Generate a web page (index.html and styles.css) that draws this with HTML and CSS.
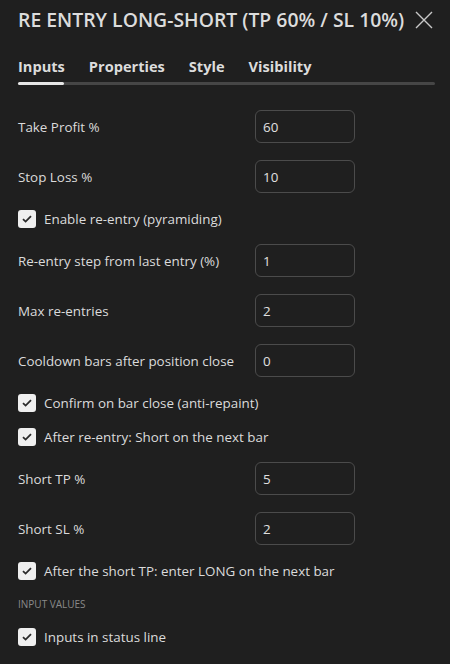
FILE: index.html
```html
<!DOCTYPE html>
<html>
<head>
<meta charset="utf-8">
<link rel="stylesheet" href="styles.css">
</head>
<body>
<div class="dialog">
  <header class="head">
    <h1 class="title">RE ENTRY LONG-SHORT (TP 60% / SL 10%)</h1>
    <svg class="close" width="18" height="18" viewBox="0 0 18 18"><path d="M1 1L17 17M17 1L1 17" stroke="#c8c8c8" stroke-width="1.4" fill="none"/></svg>
  </header>
  <nav class="tabs">
    <span class="tab active">Inputs</span>
    <span class="tab">Properties</span>
    <span class="tab">Style</span>
    <span class="tab">Visibility</span>
  </nav>
  <div class="track"><div class="track-active"></div></div>
  <div class="content">
    <div class="row field"><span class="label">Take Profit %</span><span class="input">60</span></div>
    <div class="row field"><span class="label">Stop Loss %</span><span class="input">10</span></div>
    <div class="row check"><span class="box"><svg width="12" height="10" viewBox="0 0 12 10"><path d="M2 5.2L4.6 7.6L10 2.2" stroke="#2a2a2a" stroke-width="1.8" fill="none"/></svg></span><span class="label">Enable re-entry (pyramiding)</span></div>
    <div class="row field"><span class="label">Re-entry step from last entry (%)</span><span class="input">1</span></div>
    <div class="row field"><span class="label">Max re-entries</span><span class="input">2</span></div>
    <div class="row field"><span class="label">Cooldown bars after position close</span><span class="input">0</span></div>
    <div class="row check"><span class="box"><svg width="12" height="10" viewBox="0 0 12 10"><path d="M2 5.2L4.6 7.6L10 2.2" stroke="#2a2a2a" stroke-width="1.8" fill="none"/></svg></span><span class="label">Confirm on bar close (anti-repaint)</span></div>
    <div class="row check"><span class="box"><svg width="12" height="10" viewBox="0 0 12 10"><path d="M2 5.2L4.6 7.6L10 2.2" stroke="#2a2a2a" stroke-width="1.8" fill="none"/></svg></span><span class="label">After re-entry: Short on the next bar</span></div>
    <div class="row field"><span class="label">Short TP %</span><span class="input">5</span></div>
    <div class="row field"><span class="label">Short SL %</span><span class="input">2</span></div>
    <div class="row check"><span class="box"><svg width="12" height="10" viewBox="0 0 12 10"><path d="M2 5.2L4.6 7.6L10 2.2" stroke="#2a2a2a" stroke-width="1.8" fill="none"/></svg></span><span class="label">After the short TP: enter LONG on the next bar</span></div>
    <div class="section">INPUT VALUES</div>
    <div class="row check"><span class="box"><svg width="12" height="10" viewBox="0 0 12 10"><path d="M2 5.2L4.6 7.6L10 2.2" stroke="#2a2a2a" stroke-width="1.8" fill="none"/></svg></span><span class="label">Inputs in status line</span></div>
  </div>
</div>
</body>
</html>
```

FILE: styles.css
```css
html, body {
  margin: 0;
  padding: 0;
  background: #1f1f1f;
}
body {
  font-family: "Open Sans", "Noto Sans", sans-serif;
  color: #dbdbdb;
  width: 450px;
  height: 664px;
  overflow: hidden;
}
.dialog {
  padding: 0 15px 0 18px;
}
.head {
  display: flex;
  align-items: center;
  justify-content: space-between;
  height: 40px;
}
.title {
  margin: 0;
  font-size: 19.4px;
  font-weight: 600;
  color: #dcdcdc;
  white-space: nowrap;
  line-height: 40px;
}
.close {
  margin-right: 2px;
  flex: none;
}
.tabs {
  display: flex;
  gap: 24px;
  height: 42px;
  box-sizing: border-box;
  padding-top: 10px;
  align-items: center;
}
.tab {
  font-size: 14.6px;
  font-weight: 700;
  color: #dcdcdc;
}
.track {
  height: 3px;
  background: #464646;
  border-radius: 2px;
}
.track-active {
  width: 46px;
  height: 3px;
  background: #e6e6e6;
  border-radius: 2px;
}
.content {
  padding-top: 25px;
}
.row {
  display: flex;
  align-items: center;
  font-size: 13.4px;
}
.field {
  height: 33px;
  margin-bottom: 17px;
}
.field .label {
  width: 237px;
  flex: none;
}
.input {
  box-sizing: border-box;
  width: 100px;
  height: 33px;
  border: 1px solid #4b4b4b;
  border-radius: 6px;
  padding-left: 7px;
  display: flex;
  align-items: center;
  font-size: 13.4px;
  color: #e0e0e0;
}
.check {
  height: 17px;
  margin-bottom: 17px;
}
.box {
  width: 18px;
  height: 18px;
  flex: none;
  border-radius: 3px;
  background: #efefef;
  display: flex;
  align-items: center;
  justify-content: center;
  margin-right: 8px;
}
.section {
  font-size: 10px;
  color: #8a8a8a;
  height: 17px;
  line-height: 17px;
  margin-bottom: 15px;
}
```
